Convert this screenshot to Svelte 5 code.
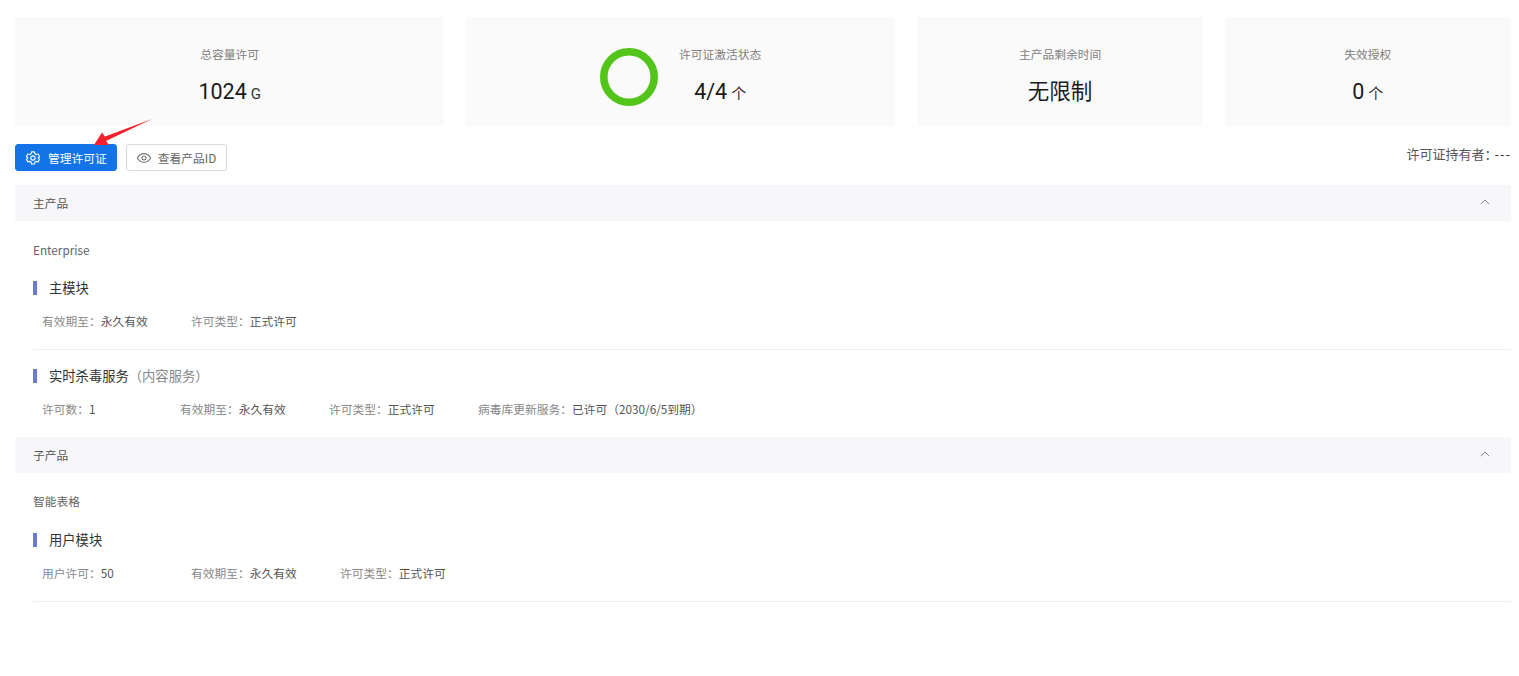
<script>
	const cards = [
		{ title: '总容量许可', value: '1024', unit: 'G' },
		{ title: '许可证激活状态', value: '4/4', unit: '个', ring: true },
		{ title: '主产品剩余时间', value: '无限制', unit: '' },
		{ title: '失效授权', value: '0', unit: '个' }
	];

	const sections = [
		{
			title: '主产品',
			name: 'Enterprise',
			modules: [
				{
					title: '主模块',
					fields: [
						['有效期至：', '永久有效'],
						['许可类型：', '正式许可']
					]
				},
				{
					title: '实时杀毒服务',
					note: '（内容服务）',
					narrow: true,
					fields: [
						['许可数：', '1'],
						['有效期至：', '永久有效'],
						['许可类型：', '正式许可'],
						['病毒库更新服务：', '已许可（2030/6/5到期）']
					]
				}
			]
		},
		{
			title: '子产品',
			name: '智能表格',
			modules: [
				{
					title: '用户模块',
					divider: true,
					fields: [
						['用户许可：', '50'],
						['有效期至：', '永久有效'],
						['许可类型：', '正式许可']
					]
				}
			]
		}
	];
</script>

<div class="page">
	<div class="cards">
		{#each cards as card}
			<div class="card">
				{#if card.ring}
					<svg class="ring" viewBox="0 0 58 58" width="58" height="58">
						<circle cx="29" cy="29" r="25.2" fill="none" stroke="#52c41a" stroke-width="7.6" />
					</svg>
				{/if}
				<div class="stat">
					<div class="stat-title">{card.title}</div>
					<div class="stat-value">{card.value}{#if card.unit}<span class="unit">{card.unit}</span>{/if}</div>
				</div>
			</div>
		{/each}
	</div>

	<div class="toolbar">
		<button class="btn primary">
			<svg viewBox="0 0 24 24" width="16" height="16" fill="none" stroke="currentColor" stroke-width="1.7" stroke-linejoin="round">
				<path d="M9.800 2.800h4.400l.7 2.900 1.900 1.100 2.900-.8 2.200 3.800-2.200 2.200 2.200 2-2.200 3.800-2.900-.8-1.900 1.100-.7 2.900H9.800l-.7-2.900-1.900-1.100-2.900.8-2.200-3.800 2.200-2-2.200-2.200 2.200-3.800 2.900.8 1.900-1.100z" />
				<circle cx="12" cy="12" r="3.200" />
			</svg>
			管理许可证
		</button>
		<button class="btn second">
			<svg viewBox="0 0 24 24" width="16" height="16" fill="none" stroke="#777" stroke-width="1.600">
				<path d="M2 12c2.600-4.400 6-6.600 10-6.600s7.400 2.200 10 6.600c-2.600 4.400-6 6.600-10 6.600S4.600 16.400 2 12z" />
				<circle cx="12" cy="12" r="3" />
			</svg>
			查看产品ID
		</button>
		<div class="holder">许可证持有者：<span class="holder-val">---</span></div>
		<svg class="arrow" viewBox="0 0 62 30" width="62" height="30">
			<path d="M59 2 12 19.500 9 15.500 1 28 16 28 13 24Z" fill="#f5222d" />
		</svg>
	</div>

	{#each sections as section}
		<section>
			<div class="head">
				<span>{section.title}</span>
				<svg viewBox="0 0 10 10" width="10" height="10" fill="none" stroke="#888" stroke-width="1">
					<path d="M.8 7.200 5 3 9.200 7.200" />
				</svg>
			</div>
			<div class="body">
				<div class="name">{section.name}</div>
				{#each section.modules as mod, i}
					<div class="module" class:ruled={i < section.modules.length - 1 || mod.divider}>
						<div class="mod-title">{mod.title}{#if mod.note}<span class="note">{mod.note}</span>{/if}</div>
						<div class="fields" class:narrow={mod.narrow}>
							{#each mod.fields as [label, val]}
								<div class="field"><span class="label">{label}</span>{val}</div>
							{/each}
						</div>
					</div>
				{/each}
			</div>
		</section>
	{/each}
</div>

<style>
	:global(body) {
		background: #fff;
		font-family: 'Noto Sans CJK SC', 'Noto Sans', sans-serif;
		font-size: 11.75px;
		color: #444;
	}

	.page {
		padding: 17px 8px 0 15px;
	}

	.cards {
		display: grid;
		grid-template-columns: 3fr 3fr 2fr 2fr;
		gap: 21.5px;
	}

	.card {
		box-sizing: border-box;
		height: 109px;
		padding-top: 11px;
		background: #fafafa;
		display: flex;
		align-items: center;
		justify-content: center;
		gap: 21px;
	}

	.ring {
		display: block;
	}

	.stat {
		text-align: center;
	}

	.stat-title {
		color: #808080;
		line-height: 18px;
		margin-bottom: 12px;
	}

	.stat-value {
		height: 35px;
		font-family: 'Roboto', 'Noto Sans CJK SC', sans-serif;
		font-size: 21.5px;
		line-height: 34px;
		color: #1a1a1a;
	}

	.unit {
		font-size: 15px;
		margin-left: 4px;
		color: #333;
	}

	.toolbar {
		position: relative;
		display: flex;
		align-items: center;
		gap: 9px;
		margin-top: 18px;
	}

	.btn {
		display: flex;
		align-items: center;
		gap: 7px;
		height: 27px;
		padding: 0 9px;
		border: 1px solid #d9d9e0;
		border-radius: 3px;
		background: #fff;
		color: #666;
		font: inherit;
	}

	.primary {
		background: #1473e6;
		border-color: #1473e6;
		color: #fff;
	}

	.second {
		gap: 6px;
		padding-right: 10px;
	}

	.holder {
		margin-left: auto;
		margin-top: -9px;
		font-size: 13px;
		color: #555;
	}

	.holder-val {
		margin-left: -3px;
		font-size: 13px;
		letter-spacing: 1px;
		color: #333;
	}

	.arrow {
		position: absolute;
		left: 78px;
		top: -27px;
	}

	.head {
		display: flex;
		align-items: center;
		justify-content: space-between;
		height: 36px;
		padding: 0 21px 2px 18px;
		box-sizing: border-box;
		background: #f7f7f9;
		color: #555;
		margin-top: 14px;
	}

	section + section .head {
		margin-top: 0;
	}

	.body {
		padding: 0 0 0 18px;
	}

	.name {
		color: #666;
		line-height: 18px;
		padding-top: 20px;
		margin-bottom: 22px;
	}

	section + section .name {
		padding-top: 19px;
		margin-bottom: 23px;
	}

	.module {
		padding-bottom: 19px;
	}

	.module.ruled {
		border-bottom: 1px solid #eee;
		margin-bottom: 19px;
	}

	.mod-title {
		border-left: 4px solid #6b78d8;
		padding-left: 12px;
		font-size: 13.3px;
		line-height: 14px;
		color: #333;
	}

	.note {
		color: #888;
	}

	.fields {
		display: flex;
		margin-top: 17px;
		padding-left: 9px;
		line-height: 18px;
		color: #555;
	}

	.field {
		min-width: 106px;
		margin-right: 43px;
	}

	.narrow .field:first-child {
		min-width: 95px;
	}

	.label {
		color: #888;
	}
</style>
